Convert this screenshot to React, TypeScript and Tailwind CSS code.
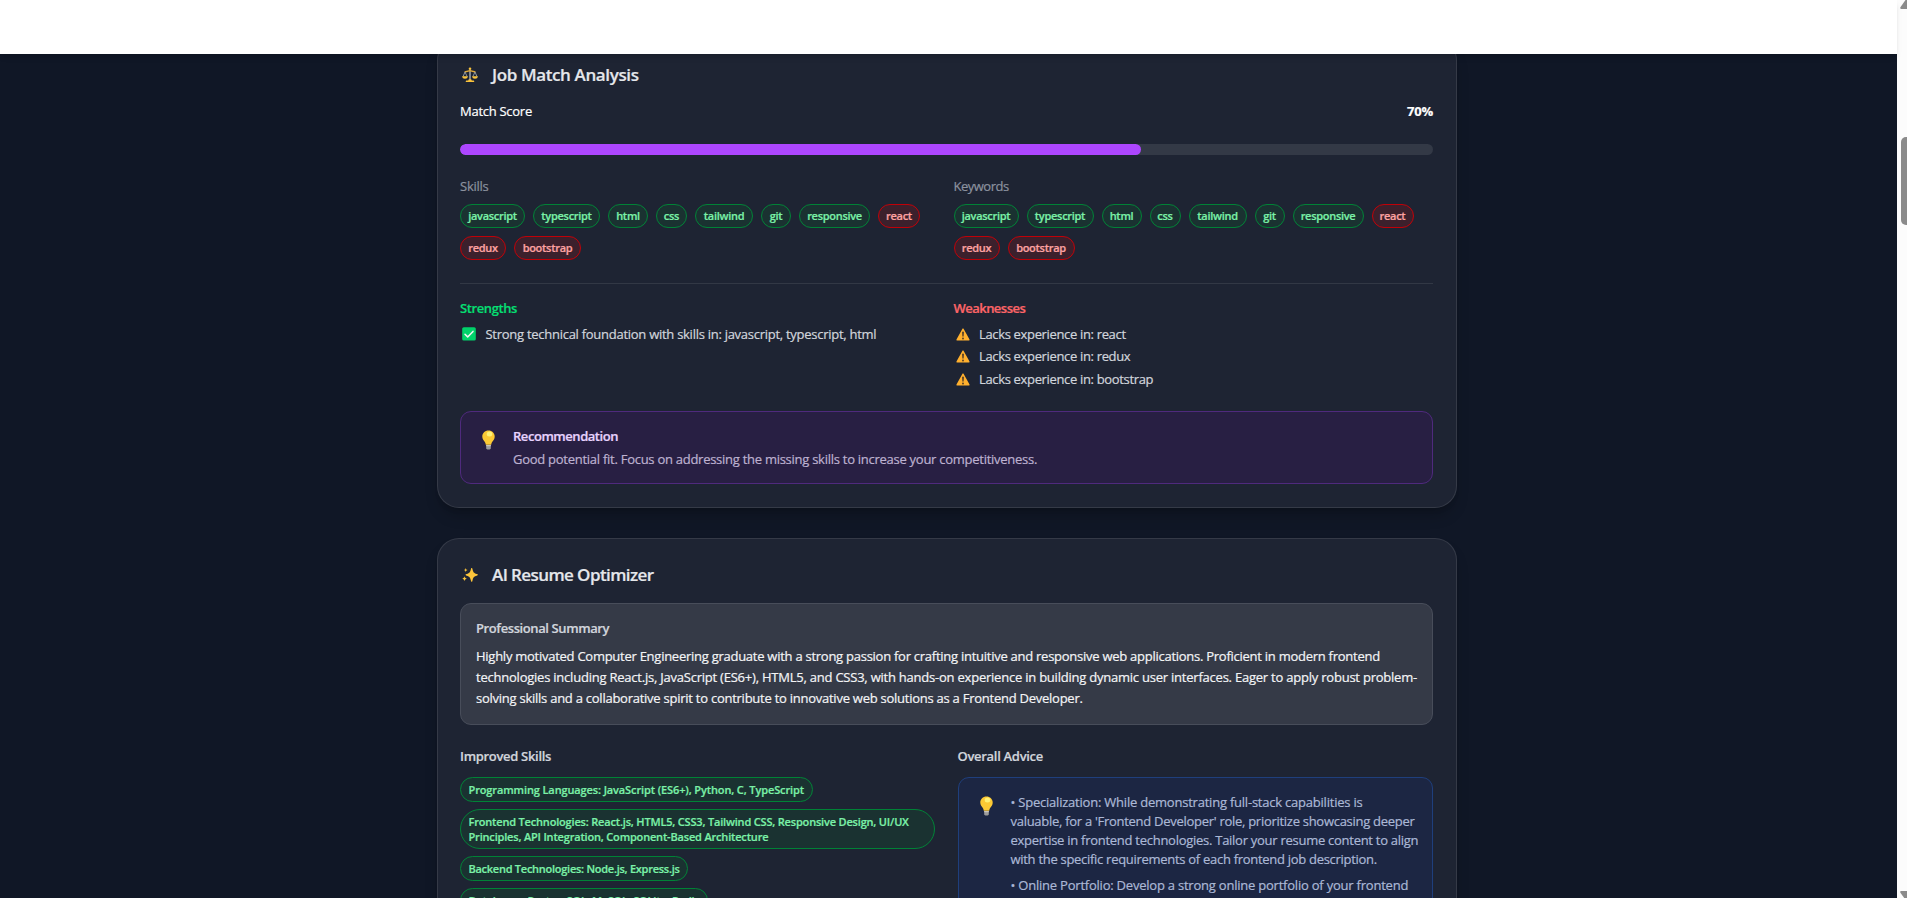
import clsx from "clsx";
import type { ReactNode } from "react";

type Tag = { name: string; size: string; missing?: boolean };

const tags: Tag[] = [
  { name: "javascript", size: "w-[65px]" },
  { name: "typescript", size: "w-[67px]" },
  { name: "html", size: "w-[40px]" },
  { name: "css", size: "w-[31px]" },
  { name: "tailwind", size: "w-[58px]" },
  { name: "git", size: "w-[30px]" },
  { name: "responsive", size: "w-[71px]" },
  { name: "react", size: "w-[42px]", missing: true },
  { name: "redux", size: "w-[46px]", missing: true },
  { name: "bootstrap", size: "w-[67px]", missing: true }
];

const weaknesses = [
  { text: "Lacks experience in: react", height: "h-[22px]" },
  { text: "Lacks experience in: redux", height: "h-[23px]" },
  { text: "Lacks experience in: bootstrap", height: "h-[22px]" }
];

const improvedSkills = [
  { lines: ["Programming Languages: JavaScript (ES6+), Python, C, TypeScript"], style: "w-[353px] h-[25px] tracking-[-0.12px]" },
  {
    lines: [
      "Frontend Technologies: React.js, HTML5, CSS3, Tailwind CSS, Responsive Design, UI/UX",
      "Principles, API Integration, Component-Based Architecture"
    ],
    style: "w-[475px] h-10 tracking-[-0.18px]"
  },
  { lines: ["Backend Technologies: Node.js, Express.js"], style: "w-[228px] h-[25px] tracking-[-0.26px]" },
  { lines: ["Databases: PostgreSQL, MySQL, SQLite, Redis"], style: "w-[248px] h-[25px] tracking-[-0.2px]" }
];

const summary = [
  {
    text: "Highly motivated Computer Engineering graduate with a strong passion for crafting intuitive and responsive web applications. Proficient in modern frontend",
    tracking: "tracking-[-0.26px]"
  },
  {
    text: "technologies including React.js, JavaScript (ES6+), HTML5, and CSS3, with hands-on experience in building dynamic user interfaces. Eager to apply robust problem-",
    tracking: "tracking-[-0.225px]"
  },
  {
    text: "solving skills and a collaborative spirit to contribute to innovative web solutions as a Frontend Developer.",
    tracking: "tracking-[-0.25px]"
  }
];

const advice = [
  [
    { text: "• Specialization: While demonstrating full-stack capabilities is", tracking: "tracking-[-0.22px]" },
    { text: "valuable, for a 'Frontend Developer' role, prioritize showcasing deeper", tracking: "tracking-[-0.28px]" },
    { text: "expertise in frontend technologies. Tailor your resume content to align", tracking: "tracking-[-0.27px]" },
    { text: "with the specific requirements of each frontend job description.", tracking: "tracking-[-0.29px]" }
  ],
  [{ text: "• Online Portfolio: Develop a strong online portfolio of your frontend", tracking: "tracking-[-0.22px]" }]
];

function ScalesIcon() {
  return (
    <svg width="16" height="16" viewBox="0 0 16 16" fill="none">
      <path d="M8 3v10" stroke="#9aa0a8" strokeWidth="1.6" />
      <path d="M2.6 5 8 3.6 13.400 5" stroke="#e0a93a" strokeWidth="1.300" />
      <path d="M3 5 1 9.600M3 5l2.200 4.600M13 5l-2.200 4.600M13 5l2 4.600" stroke="#9aa0a8" strokeWidth=".9" />
      <circle cx="8" cy="1.800" r="1.300" fill="#f9c23c" />
      <path d="M.2 9.300h5.600c0 1.700-1.100 2.500-2.800 2.500S.2 11 .2 9.300ZM10.200 9.300h5.600c0 1.700-1.100 2.500-2.800 2.500s-2.800-.8-2.800-2.500Z" fill="#f9c23c" />
      <path d="M6.800 12.200h2.400l.6 1.300h1.600c.5 0 .9.600.9 1.500H3.700c0-.9.400-1.500.9-1.500h1.600Z" fill="#f9c23c" />
    </svg>
  );
}

function SparklesIcon() {
  return (
    <svg width="16" height="16" viewBox="0 0 16 16" fill="#fcc53b">
      <path d="M9.700 1c.5 0 .6.400.8 1.200.7 2.900 1.300 3.900 4.200 4.700.8.200 1.200.4 1.200.9s-.4.700-1.200.9c-2.900.8-3.500 1.800-4.200 4.700-.2.800-.3 1.300-.8 1.300s-.6-.5-.8-1.300c-.7-2.900-1.300-3.900-4.200-4.700-.8-.2-1.200-.4-1.200-.9s.4-.7 1.200-.9c2.900-.8 3.500-1.800 4.200-4.700C9.100 1.400 9.200 1 9.700 1Z" />
      <path d="M3.700 1c.3 1.300.6 1.700 2 2.100-1.400.4-1.700.8-2 2.100-.3-1.300-.6-1.700-2-2.100 1.400-.4 1.700-.8 2-2.100ZM2.500 9.300c.4 1.500.8 2 2.400 2.400-1.600.4-2 .9-2.400 2.400C2.100 12.600 1.700 12.100.2 11.700c1.500-.4 1.900-.9 2.300-2.400Z" />
    </svg>
  );
}

function CheckIcon() {
  return (
    <svg width="14" height="14" viewBox="0 0 14 14" fill="none">
      <rect x=".2" y=".2" width="13.600" height="13.400" rx="1.600" fill="#00d26a" />
      <path d="m3 7.200 2.700 2.700L11 4.400" stroke="#f4f4f4" strokeWidth="1.500" strokeLinecap="round" strokeLinejoin="round" />
    </svg>
  );
}

function WarningIcon() {
  return (
    <svg width="14" height="13" viewBox="0 0 14 13">
      <path d="M6.300.9c.3-.6 1.100-.6 1.400 0l5.700 10.300c.4.700 0 1.300-.7 1.300H1.300c-.7 0-1.100-.6-.7-1.300Z" fill="#ffb02e" />
      <path d="M6.100 4.300c0-.5.400-.8.900-.8s.9.300.9.800l-.3 3.900c0 .3-.3.500-.6.500s-.6-.2-.6-.5Z" fill="#4a3728" />
      <circle cx="7" cy="10.500" r=".9" fill="#4a3728" />
    </svg>
  );
}

function BulbIcon() {
  return (
    <svg width="13" height="20" viewBox="0 0 13 20">
      <path d="M4.200 15h4.600v3.200c0 .7-.5 1.200-1.200 1.200H5.400c-.7 0-1.200-.5-1.200-1.200Z" fill="#9b9b9b" />
      <path d="M4.200 15h4.600v1.200H4.200Z" fill="#c9c4bd" />
      <path d="M6.500.4C2.900.4.300 3.100.3 6.500c0 2.200 1 3.500 2 4.800.8 1 1.300 2 1.500 3.500h5.400c.2-1.500.7-2.500 1.500-3.500 1-1.300 2-2.600 2-4.800 0-3.400-2.600-6.100-6.200-6.100Z" fill="#fcc934" />
      <ellipse cx="7.500" cy="4" rx="2.800" ry="2.500" fill="#fff176" />
    </svg>
  );
}

function Badge({ tag }: { tag: Tag }) {
  return (
    <span
      className={clsx(
        "h-6 rounded-full border text-center text-[11px] leading-[22px] font-semibold tracking-[-0.29px] whitespace-nowrap",
        tag.size,
        tag.missing ? "bg-[#3c202c] border-red-700 text-red-300" : "bg-[#1a3231] border-green-700 text-green-300"
      )}
    >
      {tag.name}
    </span>
  );
}

function TagGroup({ label, tracking }: { label: string; tracking: string }) {
  return (
    <div>
      <p className={clsx("text-[13px] leading-5 text-[#8c929f]", tracking)}>{label}</p>
      <div className="mt-2 flex flex-wrap gap-2">
        {tags.map((tag) => (
          <Badge key={tag.name} tag={tag} />
        ))}
      </div>
    </div>
  );
}

function CardTitle({ icon, tracking, children }: { icon: ReactNode; tracking: string; children: ReactNode }) {
  return (
    <div className="flex h-[26px] items-center gap-3.5 pl-0.5">
      {icon}
      <h2 className={clsx("text-[17px] leading-[26px] font-semibold text-gray-200", tracking)}>{children}</h2>
    </div>
  );
}

const card = "w-[1020px] rounded-[22px] border border-white/10 bg-[#1e2433] pr-[23px] pl-[22px] shadow-lg shadow-black/20";

export default function App() {
  return (
    <div className="flex h-screen overflow-hidden bg-[#101726] font-['Open_Sans','Noto_Sans',sans-serif] [-webkit-text-stroke:0.2px]">
      <div className="flex h-full min-w-0 flex-1 flex-col">
        <header className="relative z-10 h-[54px] shrink-0 bg-white shadow-md" />

        <main className="flex-1 overflow-hidden pl-[437px]">
          <section className={clsx(card, "-mt-4 pt-[23px] pb-[23px]")}>
            <CardTitle icon={<ScalesIcon />} tracking="tracking-[-0.38px]">
              Job Match Analysis
            </CardTitle>

            <div className="mt-[13px] flex items-center justify-between text-[13px] leading-5 text-white">
              <span className="tracking-[-0.27px]">Match Score</span>
              <span className="font-bold tracking-[-0.2px]">70%</span>
            </div>
            <div className="mt-[23px] h-[11px] overflow-hidden rounded-full bg-[#333946]">
              <div className="h-full rounded-full bg-purple-500" style={{ width: "70%" }} />
            </div>

            <div className="mt-[21px] grid grid-cols-2 gap-x-[14px]">
              <TagGroup label="Skills" tracking="tracking-[-0.25px]" />
              <TagGroup label="Keywords" tracking="tracking-[-0.5px]" />
            </div>

            <div className="mt-[23px] grid grid-cols-2 gap-x-[14px] border-t border-[#323845] pt-3.5 text-[13px]">
              <div>
                <h3 className="leading-5 font-semibold tracking-[-0.4px] text-green-400">Strengths</h3>
                <ul className="mt-[5px]">
                  <li className="flex h-[22px] items-center gap-[9.5px] pl-0.5 leading-[22px] tracking-[-0.27px] whitespace-nowrap text-gray-300">
                    <CheckIcon />
                    Strong technical foundation with skills in: javascript, typescript, html
                  </li>
                </ul>
              </div>
              <div>
                <h3 className="leading-5 font-semibold tracking-[-0.53px] text-red-400">Weaknesses</h3>
                <ul className="mt-[5px]">
                  {weaknesses.map((item) => (
                    <li
                      key={item.text}
                      className={clsx("flex items-start gap-[9.5px] pl-0.5 leading-[22px] tracking-[-0.34px] text-gray-300", item.height)}
                    >
                      <span className="pt-[5px]">
                        <WarningIcon />
                      </span>
                      {item.text}
                    </li>
                  ))}
                </ul>
              </div>
            </div>

            <div className="mt-[21px] flex h-[73px] gap-[18px] rounded-[11px] border border-[#4f2a7d] bg-[#281f43] pt-3.5 pl-[21px] text-[13px]">
              <div className="pt-[4px]">
                <BulbIcon />
              </div>
              <div>
                <p className="leading-5 font-semibold tracking-[-0.45px] text-purple-200">Recommendation</p>
                <p className="mt-[3px] leading-5 tracking-[-0.265px] text-[#bdb1d0]">
                  Good potential fit. Focus on addressing the missing skills to increase your competitiveness.
                </p>
              </div>
            </div>
          </section>

          <section className={clsx(card, "mt-[30px] pt-[23px] pb-6")}>
            <CardTitle icon={<SparklesIcon />} tracking="tracking-[-0.59px]">
              AI Resume Optimizer
            </CardTitle>

            <div className="mt-[15px] h-[122px] rounded-[11px] border border-[#484d5a] bg-[#353a47] px-[15px] pt-3.5 text-[13px]">
              <h3 className="leading-5 font-semibold tracking-[-0.4px] text-gray-300">Professional Summary</h3>
              <div className="mt-2 leading-[21px] text-gray-100">
                {summary.map((line) => (
                  <p key={line.text} className={clsx("whitespace-nowrap", line.tracking)}>
                    {line.text}
                  </p>
                ))}
              </div>
            </div>

            <div className="mt-[21px] grid grid-cols-2 gap-x-[22px] text-[13px]">
              <div>
                <h3 className="leading-5 font-semibold tracking-[-0.31px] text-gray-300">Improved Skills</h3>
                <div className="mt-[11px] flex flex-col items-start gap-[7px]">
                  {improvedSkills.map((skill) => (
                    <div
                      key={skill.lines[0]}
                      className={clsx(
                        "rounded-[20px] border border-green-700 bg-[#1a3231] px-[7.5px] pt-1 text-[11px] leading-[15px] font-semibold whitespace-nowrap text-green-300",
                        skill.style
                      )}
                    >
                      {skill.lines.map((line) => (
                        <p key={line}>{line}</p>
                      ))}
                    </div>
                  ))}
                </div>
              </div>

              <div>
                <h3 className="leading-5 font-semibold tracking-[-0.3px] text-gray-300">Overall Advice</h3>
                <div className="mt-[11px] flex h-[220px] gap-[18px] rounded-[11px] border border-[#1f3f7c] bg-[#1c2643] pt-[15px] pl-[21px]">
                  <div className="pt-[3px]">
                    <BulbIcon />
                  </div>
                  <div className="flex flex-col gap-[7px] leading-[19px] text-[#abb8d6]">
                    {advice.map((item) => (
                      <div key={item[0].text}>
                        {item.map((line) => (
                          <p key={line.text} className={clsx("whitespace-nowrap", line.tracking)}>
                            {line.text}
                          </p>
                        ))}
                      </div>
                    ))}
                  </div>
                </div>
              </div>
            </div>
          </section>
        </main>
      </div>

      {/* Scrollbar */}
      <aside className="flex h-full w-2.5 shrink-0 flex-col items-end overflow-hidden bg-[#fcfcfc]">
        <svg width="7" height="10" viewBox="0 0 7 10">
          <path d="M7 0H5.500L.4 7.300C0 8.300.3 9 1.300 9H7Z" fill="#8b8b8b" />
        </svg>
        <div className="mt-[127px] h-[88px] w-1.5 rounded-l-[5px] bg-[#8b8b8b]" />
        <svg className="mt-auto" width="7" height="7" viewBox="0 0 7 7">
          <path d="M7 0H1.300C.3 0 0 .7.4 1.700L4.200 7H7Z" fill="#8b8b8b" />
        </svg>
      </aside>
    </div>
  );
}
